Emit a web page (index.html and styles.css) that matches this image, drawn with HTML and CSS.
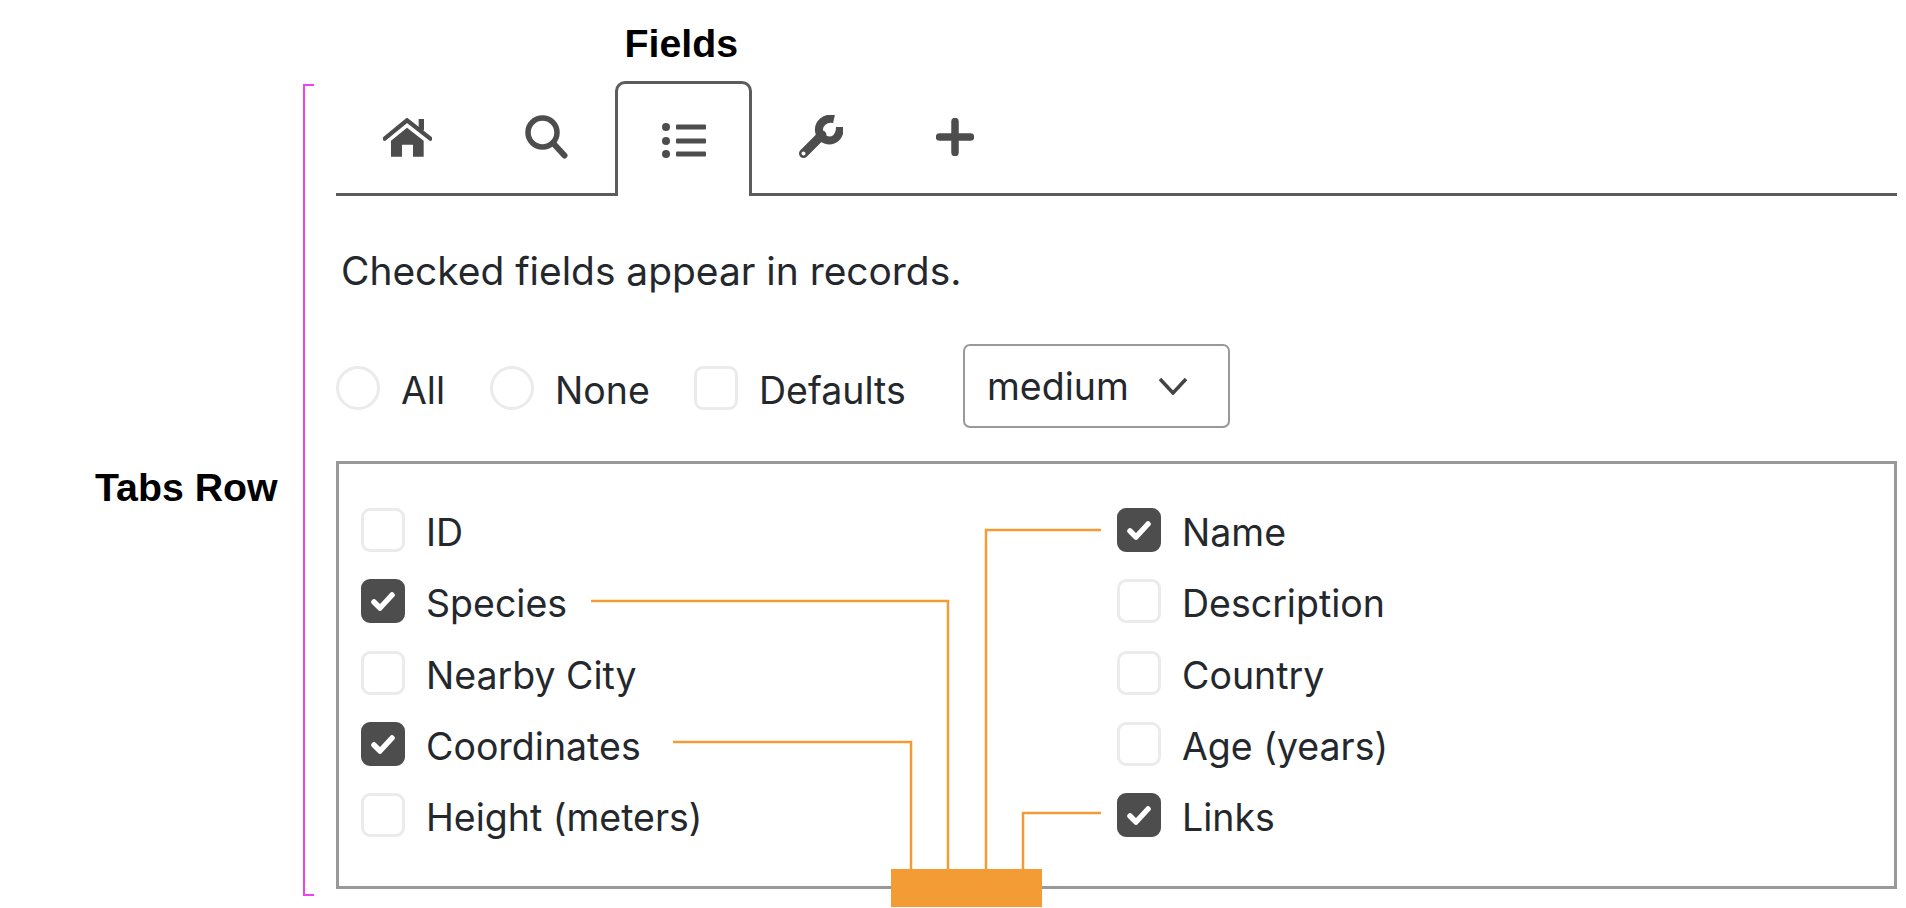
FILE: index.html
```html
<!DOCTYPE html>
<html lang="en">
<head>
    <meta charset="UTF-8">
    <title>Fields tab</title>
    <link rel="stylesheet" href="styles.css">
</head>
<body>
    <div class="page">
        <div class="caption">Fields</div>

        <div class="tabs">
            <div class="tab">
                <svg class="icon icon-home" viewBox="0 0 147 117">
                    <polyline class="roof" points="5,62 72,7 142,62"/>
                    <rect x="107" y="3" width="16" height="34"/>
                    <path d="M24 68 L72 29 L122 68 V116 H90 V80 H57 V116 H24 Z"/>
                </svg>
            </div>
            <div class="tab">
                <svg class="icon icon-search" viewBox="0 0 43 44">
                    <circle class="ring" cx="17.5" cy="17.5" r="14.5"/>
                    <line class="handle" x1="28" y1="28" x2="39.5" y2="40.5"/>
                </svg>
            </div>
            <div class="tab tab-active">
                <svg class="icon icon-list" viewBox="0 0 44 35">
                    <circle cx="4" cy="4" r="4"/>
                    <circle cx="4" cy="18" r="4"/>
                    <circle cx="4" cy="31" r="4"/>
                    <rect x="14" y="1.5" width="30" height="5" rx="1"/>
                    <rect x="14" y="15.5" width="30" height="5" rx="1"/>
                    <rect x="14" y="28.5" width="30" height="5" rx="1"/>
                </svg>
            </div>
            <div class="tab">
                <svg class="icon icon-wrench" viewBox="0 0 45 44">
                    <path class="jaw" d="M36 4 C27 2 20 9 21 16 C22 25 32 28 38 23 C41 20 42 17 42 12"/>
                    <line class="shank" x1="24" y1="20" x2="5.5" y2="38.5"/>
                    <circle class="hole" cx="5.5" cy="38.5" r="2"/>
                </svg>
            </div>
            <div class="tab">
                <svg class="icon icon-plus" viewBox="0 0 38 38">
                    <line x1="19" y1="3.5" x2="19" y2="34.5"/>
                    <line x1="3.5" y1="19" x2="34.5" y2="19"/>
                </svg>
            </div>
        </div>

        <p class="hint">Checked fields appear in records.</p>

        <div class="filters">
            <label class="choice choice-all"><span class="box round"></span>All</label>
            <label class="choice choice-none"><span class="box round"></span>None</label>
            <label class="choice choice-defaults"><span class="box"></span>Defaults</label>
            <div class="select">
                <span>medium</span>
                <svg class="chevron" viewBox="0 0 30 18"><polyline points="2,2 15,16 28,2"/></svg>
            </div>
        </div>

        <div class="fields">
            <label class="choice"><span class="box"></span>ID</label>
            <label class="choice"><span class="box checked"><svg viewBox="0 0 44 44"><polyline points="13,23 19,29 31,16"/></svg></span>Name</label>
            <label class="choice"><span class="box checked"><svg viewBox="0 0 44 44"><polyline points="13,23 19,29 31,16"/></svg></span>Species</label>
            <label class="choice"><span class="box"></span>Description</label>
            <label class="choice"><span class="box"></span>Nearby City</label>
            <label class="choice"><span class="box"></span>Country</label>
            <label class="choice"><span class="box checked"><svg viewBox="0 0 44 44"><polyline points="13,23 19,29 31,16"/></svg></span>Coordinates</label>
            <label class="choice"><span class="box"></span>Age (years)</label>
            <label class="choice"><span class="box"></span>Height (meters)</label>
            <label class="choice"><span class="box checked"><svg viewBox="0 0 44 44"><polyline points="13,23 19,29 31,16"/></svg></span>Links</label>
        </div>

        <!-- annotations drawn over the screenshot -->
        <div class="row-label">Tabs Row</div>
        <div class="bracket"></div>
        <svg class="connectors" viewBox="0 0 1906 908">
            <polyline points="591,601 948,601 948,870"/>
            <polyline points="673,742 911,742 911,870"/>
            <polyline points="1101,530 986,530 986,870"/>
            <polyline points="1101,813 1023,813 1023,870"/>
            <rect class="hub" x="891" y="869" width="151" height="38"/>
        </svg>
    </div>
</body>
</html>
```

FILE: styles.css
```css
body {
    margin: 0;
    background-color: #fff;
    font-family: 'Inter', 'Liberation Sans', sans-serif;
    color: #24282d;
}
.page {
    position: relative;
    height: 908px;
    padding: 0 9px 0 336px;
    box-sizing: border-box;
    overflow: hidden;
}
.caption {
    height: 81px;
    padding-left: 288.5px;
    box-sizing: border-box;
    font-family: 'Liberation Sans', Arial, sans-serif;
    font-weight: bold;
    font-size: 39.3px;
    line-height: 87px;
    color: #000;
}
.tabs {
    display: flex;
    height: 112px;
    border-bottom: 3px solid #5c5c5c;
}
.tab {
    display: flex;
    align-items: center;
    padding: 0 46.5px;
}
.tab-active {
    margin: 0 -1px -3px 1px;
    padding: 0 43.5px;
    background-color: #fff;
    border: 3px solid #5c5c5c;
    border-bottom: none;
    border-radius: 10px 10px 0 0;
}
.icon {
    display: block;
    fill: #4d4d4d;
    stroke: none;
}
.icon-home { width: 49px; height: 39px; }
.icon-search { width: 43px; height: 44px; }
.icon-list { width: 44px; height: 35px; }
.icon-wrench { width: 45px; height: 44px; }
.icon-plus { width: 38px; height: 38px; }
.roof {
    fill: none;
    stroke: #4d4d4d;
    stroke-width: 13;
    stroke-linecap: round;
}
.ring {
    fill: none;
    stroke: #4d4d4d;
    stroke-width: 5.5;
}
.handle {
    stroke: #4d4d4d;
    stroke-width: 6;
    stroke-linecap: round;
}
.jaw {
    fill: none;
    stroke: #4d4d4d;
    stroke-width: 8;
}
.shank {
    stroke: #4d4d4d;
    stroke-width: 9;
    stroke-linecap: round;
}
.hole {
    fill: #fff;
}
.icon-plus line {
    stroke: #4d4d4d;
    stroke-width: 7.5;
    stroke-linecap: round;
}
.hint {
    margin: 51px 0 0 5px;
    font-size: 38.9px;
    line-height: 48px;
}
.filters {
    display: flex;
    align-items: center;
    height: 84px;
    margin-top: 49px;
}
.choice {
    display: flex;
    align-items: flex-start;
    gap: 21px;
    height: 44px;
    font-size: 37.5px;
    line-height: 49px;
}
.choice-all { width: 154px; }
.choice-none { width: 204px; }
.choice-defaults { width: 269px; }
.filters .choice {
    margin-top: 3px;
}
.box {
    flex: none;
    display: block;
    width: 44px;
    height: 44px;
    box-sizing: border-box;
    border: 3px solid #ebebeb;
    border-radius: 9px;
}
.box.round {
    border-radius: 50%;
}
.box.checked {
    background-color: #4d4d4d;
    border-color: #4d4d4d;
}
.box svg {
    display: block;
    width: 44px;
    height: 44px;
    margin: -3px;
    fill: none;
    stroke: #fff;
    stroke-width: 5.5;
    stroke-linecap: round;
    stroke-linejoin: round;
}
.select {
    display: flex;
    align-items: center;
    gap: 29px;
    width: 267px;
    height: 84px;
    padding-left: 22px;
    box-sizing: border-box;
    border: 2px solid #999;
    border-radius: 7px;
    font-size: 37.5px;
}
.chevron {
    width: 30px;
    height: 18px;
    fill: none;
    stroke: #444;
    stroke-width: 3.5;
}
.fields {
    display: grid;
    grid-template-columns: 756px 1fr;
    grid-auto-rows: 44px;
    row-gap: 27.25px;
    height: 428px;
    margin-top: 33px;
    padding: 44px 0 0 22px;
    box-sizing: border-box;
    border: 3px solid #999;
}
.row-label {
    position: absolute;
    top: 465px;
    left: 95px;
    font-family: 'Liberation Sans', Arial, sans-serif;
    font-weight: bold;
    font-size: 39.3px;
    line-height: 44px;
    color: #000;
}
.bracket {
    position: absolute;
    top: 84px;
    left: 303px;
    width: 9px;
    height: 808px;
    border: solid #f040f0;
    border-width: 2px 0 2px 2px;
}
.connectors {
    position: absolute;
    top: 0;
    left: 0;
    width: 1906px;
    height: 908px;
    fill: none;
    stroke: #f39c35;
    stroke-width: 2.5;
}
.connectors .hub {
    fill: #f39c35;
    stroke: none;
}
```
